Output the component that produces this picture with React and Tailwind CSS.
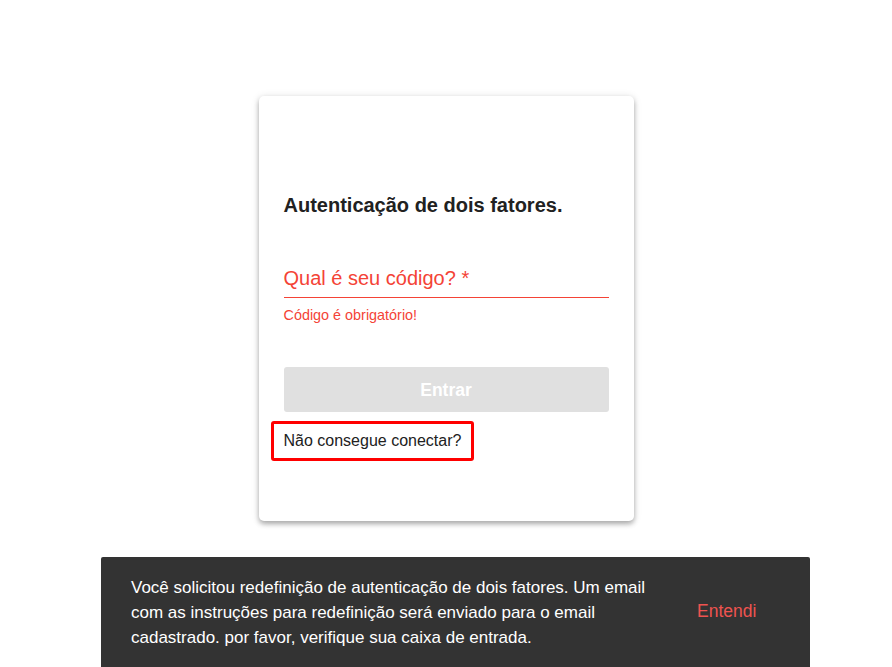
import React from "react";

const TwoFactorPage = () => {
  return (
    <div className="min-h-screen bg-white font-['Liberation_Sans',Arial,sans-serif]">
      <div className="flex justify-center pt-[96px]">
        <div className="w-[375px] h-[425px] bg-white rounded-[5px] px-[25px] pt-[97px] shadow-[0_3px_5px_rgba(0,0,0,0.28),0_1px_8px_rgba(0,0,0,0.12)]">
          <h2 className="text-[20px] leading-[24px] font-bold text-[#212121]">
            Autenticação de dois fatores.
          </h2>

          <div className="mt-[49px] border-b border-[#f44336] pb-[7px]">
            <label className="block text-[20px] leading-[24px] text-[#f44336]">
              Qual é seu código? *
            </label>
          </div>
          <p className="mt-[9px] text-[14.4px] leading-[17px] text-[#f44336]">
            Código é obrigatório!
          </p>

          <button
            disabled
            className="mt-[43px] w-full h-[45px] pt-[2px] rounded-[3px] bg-[#e0e0e0] text-white text-[17.5px] font-bold"
          >
            Entrar
          </button>

          <div className="mt-[9px] -ml-[13px]">
            <a
              href="#"
              className="inline-block border-[3px] border-[#ff0000] rounded-[3px] px-[10px] py-[7px] text-[16px] leading-[20px] text-[#212121]"
            >
              Não consegue conectar?
            </a>
          </div>
        </div>
      </div>

      {/* snackbar */}
      <div className="fixed bottom-0 left-[101px] w-[709px] h-[110px] bg-[#333333] rounded-t-[2px] pl-[30px] pt-[18px] flex items-start">
        <p className="w-[545px] text-[17px] leading-[25px] text-white">
          Você solicitou redefinição de autenticação de dois fatores. Um email
          com as instruções para redefinição será enviado para o email
          cadastrado. por favor, verifique sua caixa de entrada.
        </p>
        <button className="ml-[21px] mt-[24px] text-[17.5px] leading-[25px] text-[#ef5350]">
          Entendi
        </button>
      </div>
    </div>
  );
};

export default TwoFactorPage;
